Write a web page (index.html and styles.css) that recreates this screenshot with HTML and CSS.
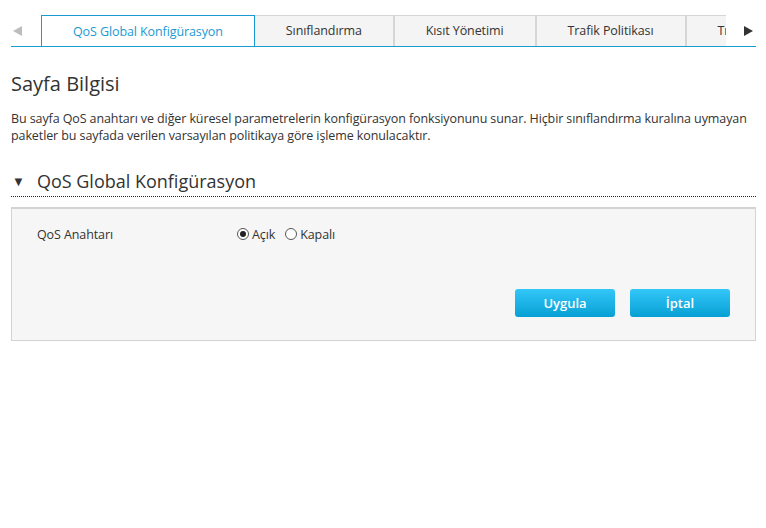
FILE: index.html
```html
<!DOCTYPE html>
<html lang="tr">
<head>
  <meta charset="UTF-8" />
  <title>QoS Global Konfigürasyon</title>
  <link rel="stylesheet" href="styles.css">
</head>
<body>

  <div class="page">
    <!-- Tab strip -->
    <div class="tabbar">
      <button class="tab-arrow left" aria-label="Önceki"></button>
      <div class="tabs">
        <div class="tab active">QoS Global Konfigürasyon</div>
        <div class="tab">Sınıflandırma</div>
        <div class="tab">Kısıt Yönetimi</div>
        <div class="tab">Trafik Politikası</div>
        <div class="tab">Trafik İzleme</div>
      </div>
      <button class="tab-arrow right" aria-label="Sonraki"></button>
    </div>

    <!-- Page info -->
    <h1 class="page-title">Sayfa Bilgisi</h1>
    <p class="page-desc">Bu sayfa QoS anahtarı ve diğer küresel parametrelerin konfigürasyon fonksiyonunu sunar. Hiçbir sınıflandırma kuralına uymayan paketler bu sayfada verilen varsayılan politikaya göre işleme konulacaktır.</p>

    <!-- Section -->
    <h2 class="section-title"><span class="caret">▼</span>QoS Global Konfigürasyon</h2>

    <div class="panel">
      <div class="form-row">
        <label class="form-label">QoS Anahtarı</label>
        <div class="radios">
          <label class="radio"><span class="dot checked"></span>Açık</label>
          <label class="radio"><span class="dot"></span>Kapalı</label>
        </div>
      </div>
      <div class="actions">
        <button class="btn">Uygula</button>
        <button class="btn">İptal</button>
      </div>
    </div>
  </div>

</body>
</html>
```

FILE: styles.css
```css
body {
  margin: 0;
  font-family: 'Open Sans', 'Noto Sans', sans-serif;
  font-size: 12.5px;
  letter-spacing: -0.1px;
  color: #333;
  background: #fff;
}

.page {
  width: 745px;
  padding: 15px 0 0 11px;
}

/* Tabs */
.tabbar {
  display: flex;
  height: 31px;
  border-bottom: 1px solid #1a9ad2;
}

.tab-arrow {
  width: 30px;
  padding: 0;
  border: none;
  background: transparent;
  display: flex;
  align-items: center;
  cursor: pointer;
}

.tab-arrow::before {
  content: "";
  border-top: 5px solid transparent;
  border-bottom: 5px solid transparent;
}

.tab-arrow.left::before {
  margin-left: 2px;
  border-right: 9px solid #bdbdbd;
}

.tab-arrow.right::before {
  margin-left: 18px;
  border-left: 9px solid #333;
}

.tabs {
  display: flex;
  flex: 1;
  overflow: hidden;
}

.tab {
  flex: none;
  padding: 0 31px;
  line-height: 30px;
  background: #f4f4f4;
  border-top: 1px solid #d6d6d6;
  border-right: 2px solid #d6d6d6;
  white-space: nowrap;
  cursor: pointer;
}

.tab.active {
  color: #1a9ad2;
  background: #fff;
  border: 1px solid #1a9ad2;
  border-bottom: none;
  line-height: 31px;
  margin-bottom: -1px;
}

/* Page info */
.page-title {
  margin: 25px 0 14px;
  font-size: 20px;
  font-weight: normal;
  line-height: 24px;
  letter-spacing: 0;
}

.page-desc {
  margin: 0;
  line-height: 17px;
}

.section-title {
  margin: 25px 0 0;
  padding-bottom: 3px;
  border-bottom: 1px dotted #222;
  font-size: 18px;
  font-weight: normal;
  line-height: 24px;
  letter-spacing: 0;
}

.caret {
  font-size: 13px;
  margin: 0 12px 0 1px;
  vertical-align: 2px;
}

/* Panel */
.panel {
  margin-top: 10px;
  background: #f6f6f6;
  border: 1px solid #d3d3d3;
  border-top-width: 2px;
  padding: 16px 25px 23px;
}

.form-row {
  display: flex;
  align-items: center;
  height: 18px;
}

.form-label {
  width: 200px;
}

.radios {
  display: flex;
  gap: 10px;
}

.radio {
  display: flex;
  align-items: center;
  gap: 3px;
  cursor: pointer;
}

.dot {
  box-sizing: border-box;
  width: 12px;
  height: 12px;
  border: 1px solid #555;
  border-radius: 50%;
  background: #fff;
  position: relative;
}

.dot.checked::after {
  content: "";
  position: absolute;
  left: 2px;
  top: 2px;
  width: 6px;
  height: 6px;
  border-radius: 50%;
  background: #222;
}

.actions {
  display: flex;
  justify-content: flex-end;
  gap: 15px;
  margin-top: 46px;
}

.btn {
  width: 100px;
  height: 28px;
  border: none;
  border-radius: 3px;
  background: linear-gradient(#34c6f8, #07a0d4);
  color: #fff;
  font-family: inherit;
  font-size: 13px;
  font-weight: 600;
  cursor: pointer;
}
```
